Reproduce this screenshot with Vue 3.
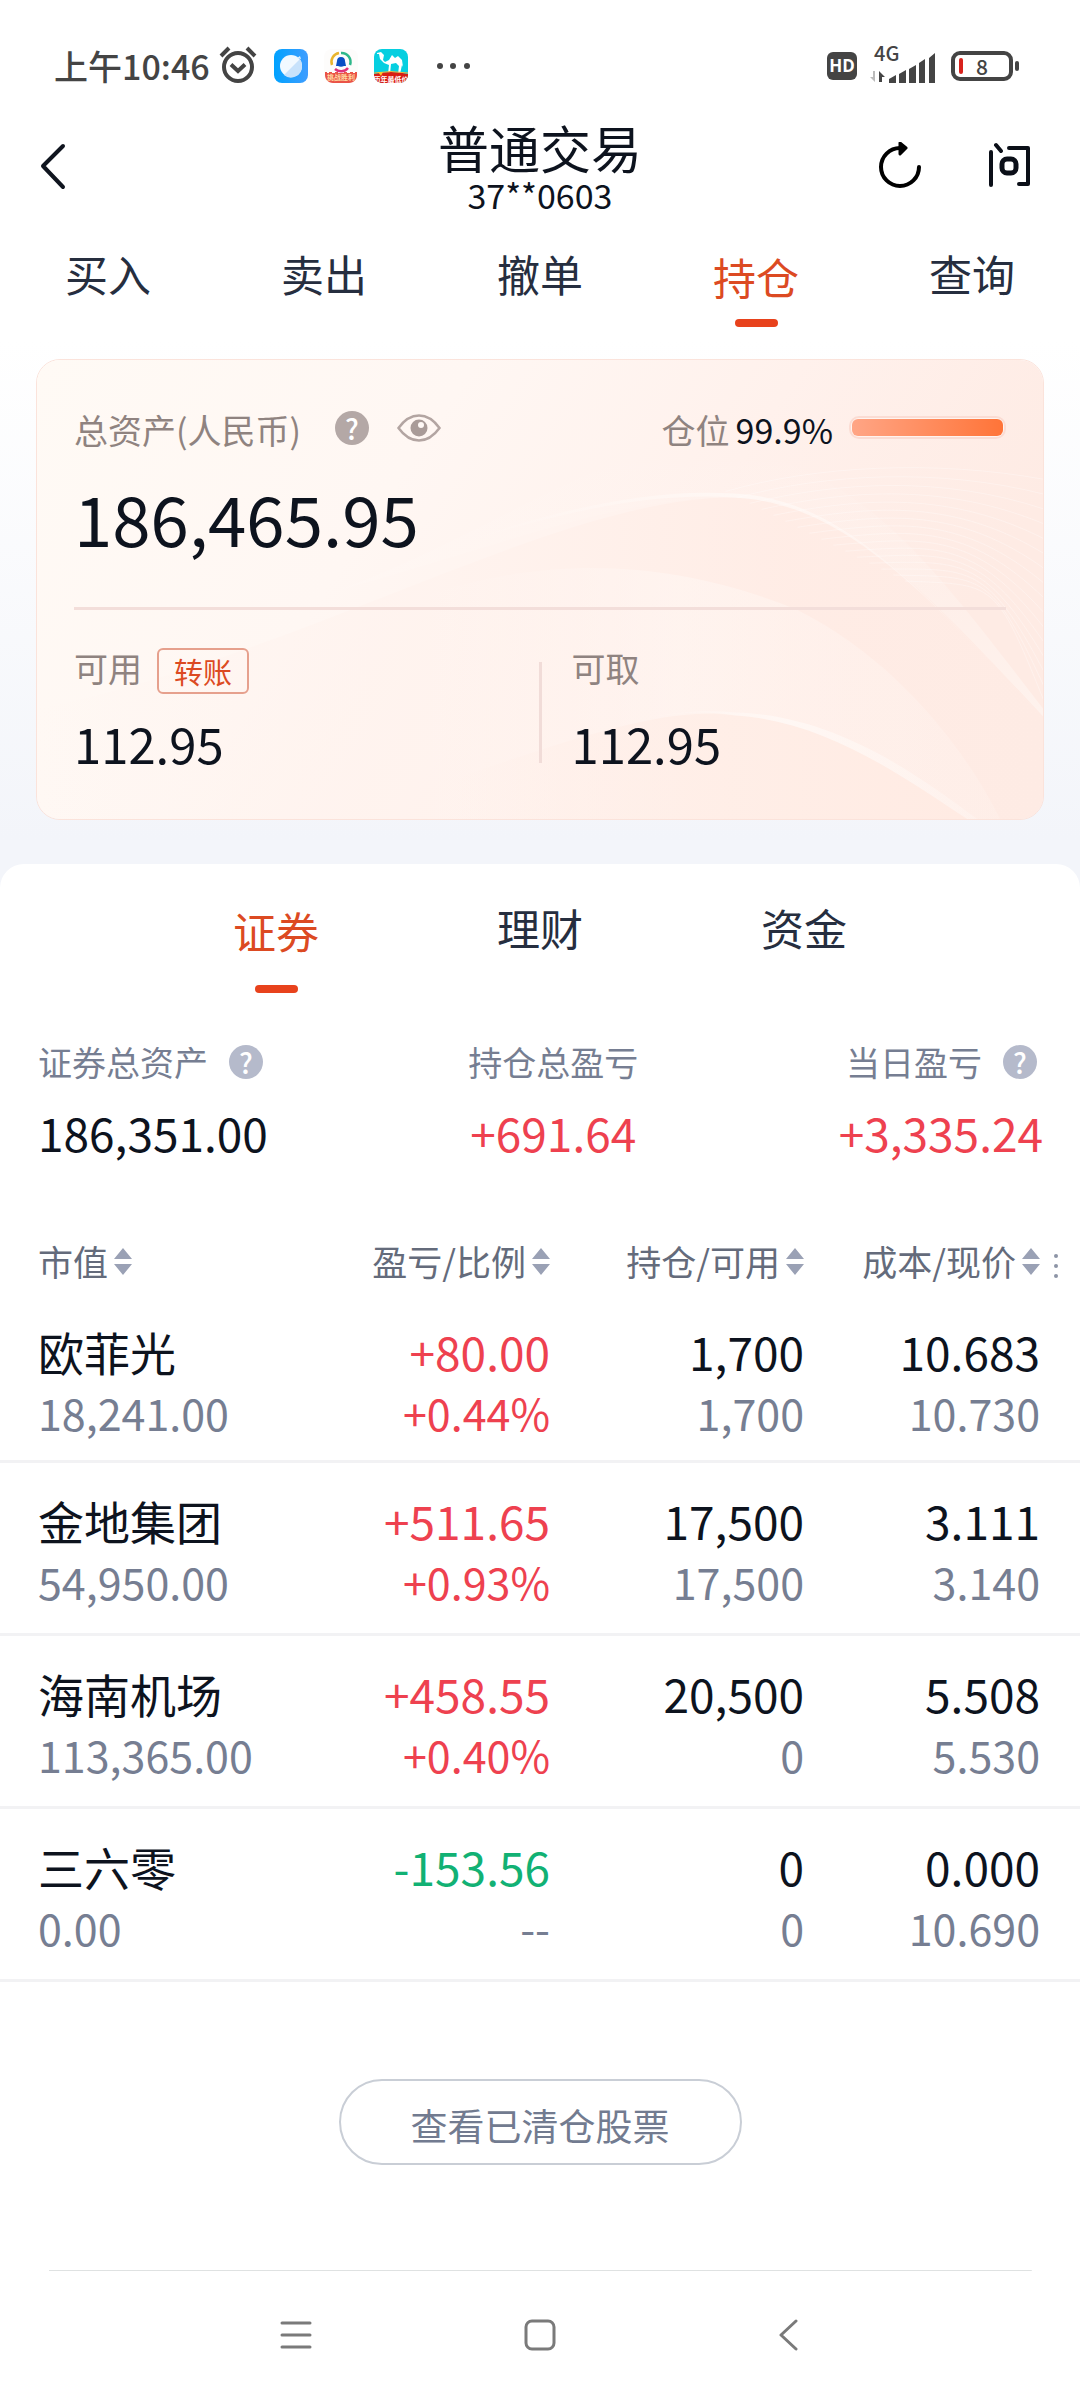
<script setup>
import { ref } from 'vue'

const mainTabs = ['买入', '卖出', '撤单', '持仓', '查询']
const activeMain = ref('持仓')

const assetTabs = ['证券', '理财', '资金']
const activeAsset = ref('证券')

const columns = ['市值', '盈亏/比例', '持仓/可用', '成本/现价']

const holdings = [
  { name: '欧菲光', value: '18,241.00', profit: '+80.00', ratio: '+0.44%', held: '1,700', usable: '1,700', cost: '10.683', price: '10.730' },
  { name: '金地集团', value: '54,950.00', profit: '+511.65', ratio: '+0.93%', held: '17,500', usable: '17,500', cost: '3.111', price: '3.140' },
  { name: '海南机场', value: '113,365.00', profit: '+458.55', ratio: '+0.40%', held: '20,500', usable: '0', cost: '5.508', price: '5.530' },
  { name: '三六零', value: '0.00', profit: '-153.56', ratio: '--', held: '0', usable: '0', cost: '0.000', price: '10.690' },
]

const tone = (text) => {
  if (text.startsWith('+')) return 'up'
  return /^-\d/.test(text) ? 'down' : ''
}

const position = 99.9

const fan = Array.from({ length: 16 }, (_, i) => {
  const y = i * 8
  return `M${690 + i * 12} ${132 + i * 6} C ${780 + i * 12} ${106 + y} ${900 + i * 4} ${100 + y} 1010 ${120 + i * 15}`
})
</script>

<template>
  <div class="page">
    <div class="status">
      <div class="status-left">
        <span class="time">上午10:46</span>
        <svg class="alarm" width="40" height="40" viewBox="0 0 40 40" fill="none" stroke="#444" aria-hidden="true">
          <circle cx="20" cy="22" r="14" stroke-width="4" />
          <path d="M13 19.500l7 6.500 7-6.500" stroke-width="4" />
          <path d="M3 11l8-8M37 11l-8-8" stroke-width="4" />
        </svg>
        <svg width="34" height="34" viewBox="0 0 34 34" aria-hidden="true">
          <defs>
            <linearGradient id="sky" x1="0" y1="0" x2="1" y2="0">
              <stop offset="0" stop-color="#00a2ff" />
              <stop offset="1" stop-color="#3f9dff" />
            </linearGradient>
          </defs>
          <rect width="34" height="34" rx="8" fill="url(#sky)" />
          <circle cx="17" cy="17" r="11" fill="#f2f9ff" />
          <path d="M28 17a11 11 0 0 1-18 9L26 10a11 11 0 0 1 2 7z" fill="#c8e2fb" />
          <path d="M23 9l3-2 1 3z" fill="#dff0ff" />
        </svg>
        <svg width="34" height="34" viewBox="0 0 34 34" aria-hidden="true">
          <rect width="34" height="34" rx="8" fill="#fdfcfb" />
          <g fill="none" stroke-width="2.500">
            <path d="M8 16a9 9 0 0 1 7-12" stroke="#e9b42c" />
            <path d="M17 4a9 9 0 0 1 9 12" stroke="#2eb88a" />
            <path d="M11 20a9 9 0 0 0 13-1" stroke="#e0337a" />
          </g>
          <path d="M17 8c3 0 4 2 4 4l1 5h-2c-2 1-4 1-6 0h-2l1-5c0-2 1-4 4-4z" fill="#0a4fc4" />
          <path d="M1 24v-1h2v1h2v-1h3v1h3v-1h3v1h6v-1h3v1h3v-1h3v1h2v-1h2v3c0 4-3 8-8 8H9c-5 0-8-4-8-8z" fill="#ea5347" />
          <text x="17" y="31" text-anchor="middle" class="tiny gold">挑战胜利</text>
        </svg>
        <svg width="34" height="34" viewBox="0 0 34 34" aria-hidden="true">
          <defs>
            <clipPath id="tile"><rect width="34" height="34" rx="8" /></clipPath>
          </defs>
          <g clip-path="url(#tile)">
            <rect width="34" height="34" fill="#06cfe0" />
            <path d="M3 4l4-1 3 3-1 5 2 2 4-2 3-5 3 3 3-2 4 4 1 7-1-2-2 9h-2l1-8-3-3-5 1-1 10h-2l1-9-5-2-4-4-1-5-2 0z" fill="#fff" />
            <path d="M0 25q17-4 34 0v9H0z" fill="#d91d12" />
            <path d="M0 24q17-3 34 0" stroke="#f3b43a" fill="none" />
            <path d="M4 23l5 0-2 4z" fill="#ffc62f" />
          </g>
          <text x="17" y="33" text-anchor="middle" class="tiny">历年最低价</text>
        </svg>
        <svg class="more" width="34" height="8" viewBox="0 0 34 8" fill="#444" aria-hidden="true">
          <circle cx="4" cy="4" r="3" /><circle cx="17" cy="4" r="3" /><circle cx="31" cy="4" r="3" />
        </svg>
      </div>
      <div class="status-right">
        <span class="hd">HD</span>
        <span class="signal">
          <span class="net">4G</span>
          <svg width="68" height="34" viewBox="0 0 68 34" fill="#444" aria-hidden="true">
            <path d="M5 22v11L0 28h3v-6z" fill="#bbb" />
            <path d="M9 33V22l6 6h-3v5z" />
            <path d="M19 30l7-4v8h-7zM29 25l7-4v13h-7zM39 20l7-4v18h-7zM49 14l6-4v24h-6zM59 9l6-5v30h-6z" />
          </svg>
        </span>
        <span class="battery"><i class="charge"></i><b>8</b></span>
      </div>
    </div>

    <header class="header">
      <button class="icon-btn" aria-label="返回">
        <svg width="48" height="48" viewBox="0 0 48 48" fill="none" stroke="#10151f" stroke-width="4" stroke-linecap="round" stroke-linejoin="round">
          <path d="M27 4L7 24l20 21" />
        </svg>
      </button>
      <div class="heading">
        <h1>普通交易</h1>
        <p>37**0603</p>
      </div>
      <div class="actions">
        <button class="icon-btn" aria-label="刷新">
          <svg width="48" height="48" viewBox="0 0 48 48" fill="none" stroke="#000" stroke-width="4" stroke-linecap="round" stroke-linejoin="round">
            <path d="M43 25A19 19 0 1 1 24 6h4" />
            <path d="M24 1l6 5-6 6z" fill="#000" stroke-width="3" />
          </svg>
        </button>
        <button class="icon-btn" aria-label="问答">
          <svg width="48" height="48" viewBox="0 0 48 48" fill="none" stroke="#0b0f18" stroke-width="4" stroke-linecap="round" stroke-linejoin="round">
            <path d="M5 10v33M10 3l5 6M23 6h19v36h-9" />
            <rect x="16" y="17" width="14" height="14" rx="5" stroke-width="5" />
          </svg>
        </button>
      </div>
    </header>

    <nav class="tabs main-tabs">
      <button v-for="tab in mainTabs" :key="tab" class="tab" :class="{ active: tab === activeMain }" @click="activeMain = tab">
        {{ tab }}
      </button>
    </nav>

    <section class="card">
      <svg class="waves" viewBox="0 0 1008 461" preserveAspectRatio="none" aria-hidden="true">
        <defs>
          <linearGradient id="base" x1="0" y1="0" x2="1" y2="0.300">
            <stop offset="0" stop-color="#fffaf5" />
            <stop offset="0.400" stop-color="#fff7f3" />
            <stop offset="0.700" stop-color="#fff1ec" />
            <stop offset="1" stop-color="#feebe4" />
          </linearGradient>
          <linearGradient id="hill" x1="0" y1="0" x2="1" y2="0">
            <stop offset="0" stop-color="#fff3ee" stop-opacity="0" />
            <stop offset="0.400" stop-color="#fff3ee" stop-opacity="0.800" />
            <stop offset="0.750" stop-color="#ffece5" stop-opacity="0.900" />
            <stop offset="1" stop-color="#feebe4" />
          </linearGradient>
          <linearGradient id="glow" x1="0" y1="0" x2="1" y2="0">
            <stop offset="0" stop-color="#fff9f6" stop-opacity="0" />
            <stop offset="0.500" stop-color="#fff9f6" stop-opacity="0.800" />
            <stop offset="1" stop-color="#fff9f6" stop-opacity="0.300" />
          </linearGradient>
          <linearGradient id="mist" x1="0" y1="0" x2="0" y2="1">
            <stop offset="0" stop-color="#fff9f6" stop-opacity="0" />
            <stop offset="1" stop-color="#fff9f6" stop-opacity="0.500" />
          </linearGradient>
          <linearGradient id="veil" gradientUnits="userSpaceOnUse" x1="380" y1="0" x2="965" y2="0">
            <stop offset="0" stop-color="#fff8f5" stop-opacity="0" />
            <stop offset="0.450" stop-color="#fff8f5" stop-opacity="0.500" />
            <stop offset="1" stop-color="#fff8f5" stop-opacity="0.200" />
          </linearGradient>
          <linearGradient id="mound" gradientUnits="userSpaceOnUse" x1="420" y1="0" x2="932" y2="0">
            <stop offset="0" stop-color="#ffeee7" stop-opacity="0" />
            <stop offset="0.450" stop-color="#ffeee7" stop-opacity="0.900" />
            <stop offset="1" stop-color="#ffebe3" />
          </linearGradient>
        </defs>
        <rect width="1008" height="461" fill="url(#base)" />
        <path d="M300 232C470 170 580 70 697 90C830 110 900 210 1008 350V358C880 220 800 138 697 138C580 138 470 185 300 232z" fill="url(#mist)" />
        <path d="M0 350C260 300 520 138 697 138C800 138 880 220 1008 358V461H0z" fill="url(#hill)" />
        <path d="M380 240C520 190 650 205 762 251C860 300 930 390 965 461H380z" fill="url(#veil)" />
        <path d="M400 192C500 160 600 132 697 138C800 142 880 220 1008 360C875 216 800 138 697 134C600 128 500 157 400 192z" fill="url(#glow)" />
        <g fill="none" stroke="#fff" stroke-opacity="0.300">
          <path v-for="d in fan" :key="d" :d="d" />
        </g>
        <path d="M420 420C580 365 640 350 700 357C790 362 870 420 932 461H420z" fill="url(#mound)" />
        <path d="M560 372C620 355 660 350 700 357C790 362 870 420 932 461H942C880 415 800 357 700 354C660 350 620 355 560 372z" fill="url(#glow)" />
      </svg>
      <div class="card-body">
        <div class="total-row">
          <span class="muted">总资产(人民币)</span>
          <span class="help warm">?</span>
          <svg class="eye" width="44" height="28" viewBox="0 0 44 28" fill="none" aria-hidden="true">
            <path d="M1.500 14C8 5 15 1.500 22 1.500S36 5 42.500 14C36 23 29 26.500 22 26.500S8 23 1.500 14z" stroke="#b3a5a2" stroke-width="2.500" />
            <circle cx="22" cy="14" r="8.500" fill="#a99b98" />
            <circle cx="24" cy="11" r="3" fill="#fff9f6" />
          </svg>
          <span class="ratio"><span class="muted">仓位</span>{{ position }}%</span>
          <span class="meter"><span class="meter-fill" :style="{ width: position + '%' }"></span></span>
        </div>
        <p class="total">186,465.95</p>
        <div class="cash">
          <div>
            <div class="cash-label"><span class="muted">可用</span><button class="transfer">转账</button></div>
            <p class="cash-value">112.95</p>
          </div>
          <span class="rule"></span>
          <div class="second">
            <div class="cash-label"><span class="muted">可取</span></div>
            <p class="cash-value">112.95</p>
          </div>
        </div>
      </div>
    </section>

    <main class="sheet">
      <nav class="tabs asset-tabs">
        <button v-for="tab in assetTabs" :key="tab" class="tab" :class="{ active: tab === activeAsset }" @click="activeAsset = tab">
          {{ tab }}
        </button>
      </nav>

      <div class="stats">
        <div class="stat">
          <div class="stat-label">证券总资产<span class="help">?</span></div>
          <p class="stat-value">186,351.00</p>
        </div>
        <div class="stat center">
          <div class="stat-label">持仓总盈亏</div>
          <p class="stat-value up">+691.64</p>
        </div>
        <div class="stat end">
          <div class="stat-label">当日盈亏<span class="help">?</span></div>
          <p class="stat-value up">+3,335.24</p>
        </div>
      </div>

      <table class="holdings">
        <thead>
          <tr>
            <th v-for="column in columns" :key="column" scope="col">
              <button class="sort">
                {{ column }}
                <svg width="18" height="27" viewBox="0 0 18 27" fill="#9aa1b5" aria-hidden="true">
                  <path d="M9 0l9 11H0zM9 27l9-11H0z" />
                </svg>
              </button>
            </th>
            <td class="grip">
              <svg width="4" height="24" viewBox="0 0 4 24" fill="#8d94a6" aria-hidden="true">
                <circle cx="2" cy="2" r="2" /><circle cx="2" cy="12" r="2" /><circle cx="2" cy="22" r="2" />
              </svg>
            </td>
          </tr>
        </thead>
        <tbody>
          <tr v-for="row in holdings" :key="row.name">
            <td><div class="first">{{ row.name }}</div><div class="sub">{{ row.value }}</div></td>
            <td>
              <div class="first" :class="tone(row.profit)">{{ row.profit }}</div>
              <div class="sub" :class="tone(row.ratio)">{{ row.ratio }}</div>
            </td>
            <td><div class="first">{{ row.held }}</div><div class="sub">{{ row.usable }}</div></td>
            <td><div class="first">{{ row.cost }}</div><div class="sub">{{ row.price }}</div></td>
            <td></td>
          </tr>
        </tbody>
      </table>

      <button class="cleared">查看已清仓股票</button>
    </main>

    <footer class="system-nav">
      <button class="icon-btn" aria-label="最近任务">
        <svg width="32" height="32" viewBox="0 0 32 32" stroke="#7a7a7a" stroke-width="3" stroke-linecap="round">
          <path d="M2 4h28M2 16h28M2 28h28" />
        </svg>
      </button>
      <button class="icon-btn" aria-label="主屏幕">
        <svg width="32" height="32" viewBox="0 0 32 32" fill="none" stroke="#7a7a7a" stroke-width="3">
          <rect x="2" y="2" width="28" height="28" rx="6" />
        </svg>
      </button>
      <button class="icon-btn" aria-label="返回上一级">
        <svg width="32" height="32" viewBox="0 0 32 32" fill="none" stroke="#7a7a7a" stroke-width="3" stroke-linecap="round" stroke-linejoin="round">
          <path d="M28 2L13 16l15 14" />
        </svg>
      </button>
    </footer>
  </div>
</template>

<style>
body {
  margin: 0;
  background: #fff;
}
</style>

<style scoped>
.page {
  font-family: "Noto Sans CJK SC", sans-serif;
  color: #0d131e;
  background: linear-gradient(#fff 340px, #f3f5fa 840px);
}

h1,
p {
  margin: 0;
  font-weight: 400;
}

button {
  margin: 0;
  padding: 0;
  border: 0;
  background: none;
  color: inherit;
  font: inherit;
}

svg {
  display: block;
  flex: none;
}

.status {
  display: flex;
  justify-content: space-between;
  align-items: center;
  height: 108px;
  padding: 12px 61px 0 54px;
}

.status-left,
.status-right {
  display: flex;
  align-items: center;
  gap: 16px;
}

.status-right {
  gap: 13px;
}

.time {
  margin-right: -8px;
  font-size: 34px;
  font-weight: 500;
  line-height: 40px;
  color: #444;
}

.alarm {
  margin-bottom: 2px;
}

.more {
  margin-left: 12px;
}

.tiny {
  font-size: 7px;
  font-weight: 700;
  fill: #fff;
}

.gold {
  fill: #ffd9a0;
}

.hd {
  width: 30px;
  height: 28px;
  border-radius: 6px;
  background: #444;
  color: #fff;
  font: 700 17px/28px "Open Sans", sans-serif;
  text-align: center;
}

.signal {
  position: relative;
}

.net {
  position: absolute;
  top: -8px;
  left: 4px;
  font: 500 20px/24px "Noto Sans CJK SC", sans-serif;
  color: #444;
}

.battery {
  position: relative;
  display: flex;
  align-items: center;
  box-sizing: border-box;
  width: 62px;
  height: 30px;
  margin-right: 6px;
  padding-left: 4px;
  border: 4px solid #444;
  border-radius: 9px;
  color: #444;
}

.battery::after {
  content: "";
  position: absolute;
  right: -10px;
  top: 6px;
  width: 4px;
  height: 10px;
  border-radius: 2px;
  background: #444;
}

.battery b {
  flex: 1;
  padding-right: 8px;
  font-size: 21px;
  font-weight: 500;
  line-height: 22px;
  text-align: center;
}

.charge {
  width: 4px;
  height: 16px;
  border-radius: 2px;
  background: #d8221c;
}

.header {
  display: grid;
  grid-template-columns: 1fr auto 1fr;
  align-items: center;
  padding: 0 36px;
}

.header .icon-btn {
  padding-bottom: 4px;
}

.heading {
  text-align: center;
}

h1 {
  font-size: 51px;
  line-height: 54px;
}

.heading p {
  font-size: 34px;
  line-height: 42px;
}

.actions {
  display: flex;
  justify-content: flex-end;
  gap: 62px;
  margin-right: 10px;
}

.tabs {
  display: flex;
  align-items: flex-start;
}

.tab {
  display: flex;
  flex: 1;
  flex-direction: column;
  align-items: center;
  font-size: 43px;
  line-height: 60px;
  color: #262e3f;
}

.tab.active {
  padding-top: 3px;
  color: #dc4a22;
}

.tab.active::after {
  content: "";
  width: 43px;
  height: 8px;
  border-radius: 4px;
  background: #e8421c;
}

.main-tabs {
  padding: 27px 0 32px;
}

.main-tabs .tab {
  gap: 13px;
}

.asset-tabs {
  padding: 33px 144px 0;
}

.asset-tabs .tab {
  gap: 25px;
}

.card {
  position: relative;
  margin: 0 36px 44px;
  overflow: hidden;
  border: 1px solid #fbe3db;
  border-radius: 24px;
}

.waves {
  position: absolute;
  inset: 0;
  width: 100%;
  height: 100%;
}

.card-body {
  position: relative;
  padding: 46px 37px;
}

.total-row {
  display: flex;
  align-items: center;
  font-size: 34px;
  line-height: 48px;
}

.muted {
  font-size: 34px;
  color: #8f8380;
}

.help {
  display: inline-block;
  width: 34px;
  height: 34px;
  margin-left: 21px;
  border-radius: 50%;
  background: #b5bacb;
  color: #fff;
  font: 500 28px/35px "Noto Sans CJK SC", sans-serif;
  text-align: center;
}

.help.warm {
  margin: 0 28px 5px 34px;
  background: #b4a8a6;
}

.eye,
.meter {
  margin-bottom: 5px;
}

.ratio {
  margin-left: auto;
}

.ratio .muted {
  margin-right: 6px;
}

.meter {
  box-sizing: border-box;
  width: 157px;
  height: 23px;
  margin-left: 16px;
  padding: 1px;
  border: 2px solid #fbdcd3;
  border-radius: 10px;
  background: #fff3ee;
}

.meter-fill {
  display: block;
  height: 100%;
  border-radius: 6px;
  background: linear-gradient(90deg, #ffa585, #ff7438);
}

.total {
  padding: 23px 0 50px;
  border-bottom: 3px solid #f3deda;
  font-size: 69px;
  line-height: 80px;
}

.cash {
  display: grid;
  grid-template-columns: 1fr 3px 1fr;
  padding-top: 38px;
}

.second {
  padding-left: 30px;
}

.rule {
  margin: 14px 0 10px;
  background: #f1dcd8;
}

.cash-label {
  display: flex;
  align-items: flex-start;
  height: 46px;
  line-height: 40px;
}

.transfer {
  box-sizing: border-box;
  width: 92px;
  height: 46px;
  margin-left: 15px;
  border: 2px solid #e6a08d;
  border-radius: 6px;
  color: #dc4a22;
  font-size: 29px;
  line-height: 38px;
}

.cash-value {
  margin-top: 19px;
  font-size: 49px;
  line-height: 60px;
}

.sheet {
  display: flex;
  flex-direction: column;
  border-radius: 24px 24px 0 0;
  background: #fff;
}

.stats {
  display: flex;
  justify-content: space-between;
  margin-top: 45px;
  padding: 0 37px 0 38px;
}

.stat-label {
  display: flex;
  align-items: center;
  font-size: 34px;
  line-height: 48px;
  color: #767e92;
}

.stat-value {
  margin-top: 16px;
  font-size: 46px;
  line-height: 60px;
}

.center {
  text-align: center;
}

.end {
  text-align: right;
}

.end .stat-label {
  justify-content: flex-end;
  padding-right: 6px;
}

.up,
.sub.up {
  color: #ee414f;
}

.down {
  color: #12b174;
}

.holdings {
  width: 100%;
  margin-top: 75px;
  table-layout: fixed;
  border-collapse: separate;
  border-spacing: 0;
}

th,
td {
  padding: 0;
  text-align: right;
  font-weight: 400;
}

th:first-child,
td:first-child {
  width: 24%;
  padding-left: 38px;
  text-align: left;
}

th:nth-child(3) {
  width: 254px;
}

th:nth-child(4) {
  width: 236px;
}

.grip {
  width: 40px;
}

.grip svg {
  margin-left: 14px;
}

.sort {
  display: inline-flex;
  align-items: center;
  gap: 6px;
  height: 48px;
  margin-bottom: 9px;
  font-size: 35px;
  line-height: 48px;
  color: #646b7b;
  white-space: nowrap;
}

tbody td {
  padding-top: 26px;
  padding-bottom: 22px;
  border-bottom: 3px solid #f2f2f4;
}

tbody tr:first-child td {
  padding-bottom: 18px;
}

.first {
  font-size: 46px;
  line-height: 62px;
}

.sub {
  font-size: 43px;
  line-height: 60px;
  color: #767e92;
}

.cleared {
  align-self: center;
  box-sizing: border-box;
  height: 86px;
  margin: 97px 0 105px;
  padding: 6px 70px 0;
  border: 2px solid #c9ced6;
  border-radius: 43px;
  color: #727b90;
  font-size: 37px;
  line-height: 76px;
}

.system-nav {
  display: flex;
  justify-content: center;
  gap: 212px;
  padding: 49px 0;
  background: linear-gradient(#dfe2e2, #dfe2e2) center top / 91% 1px no-repeat #fff;
}
</style>
